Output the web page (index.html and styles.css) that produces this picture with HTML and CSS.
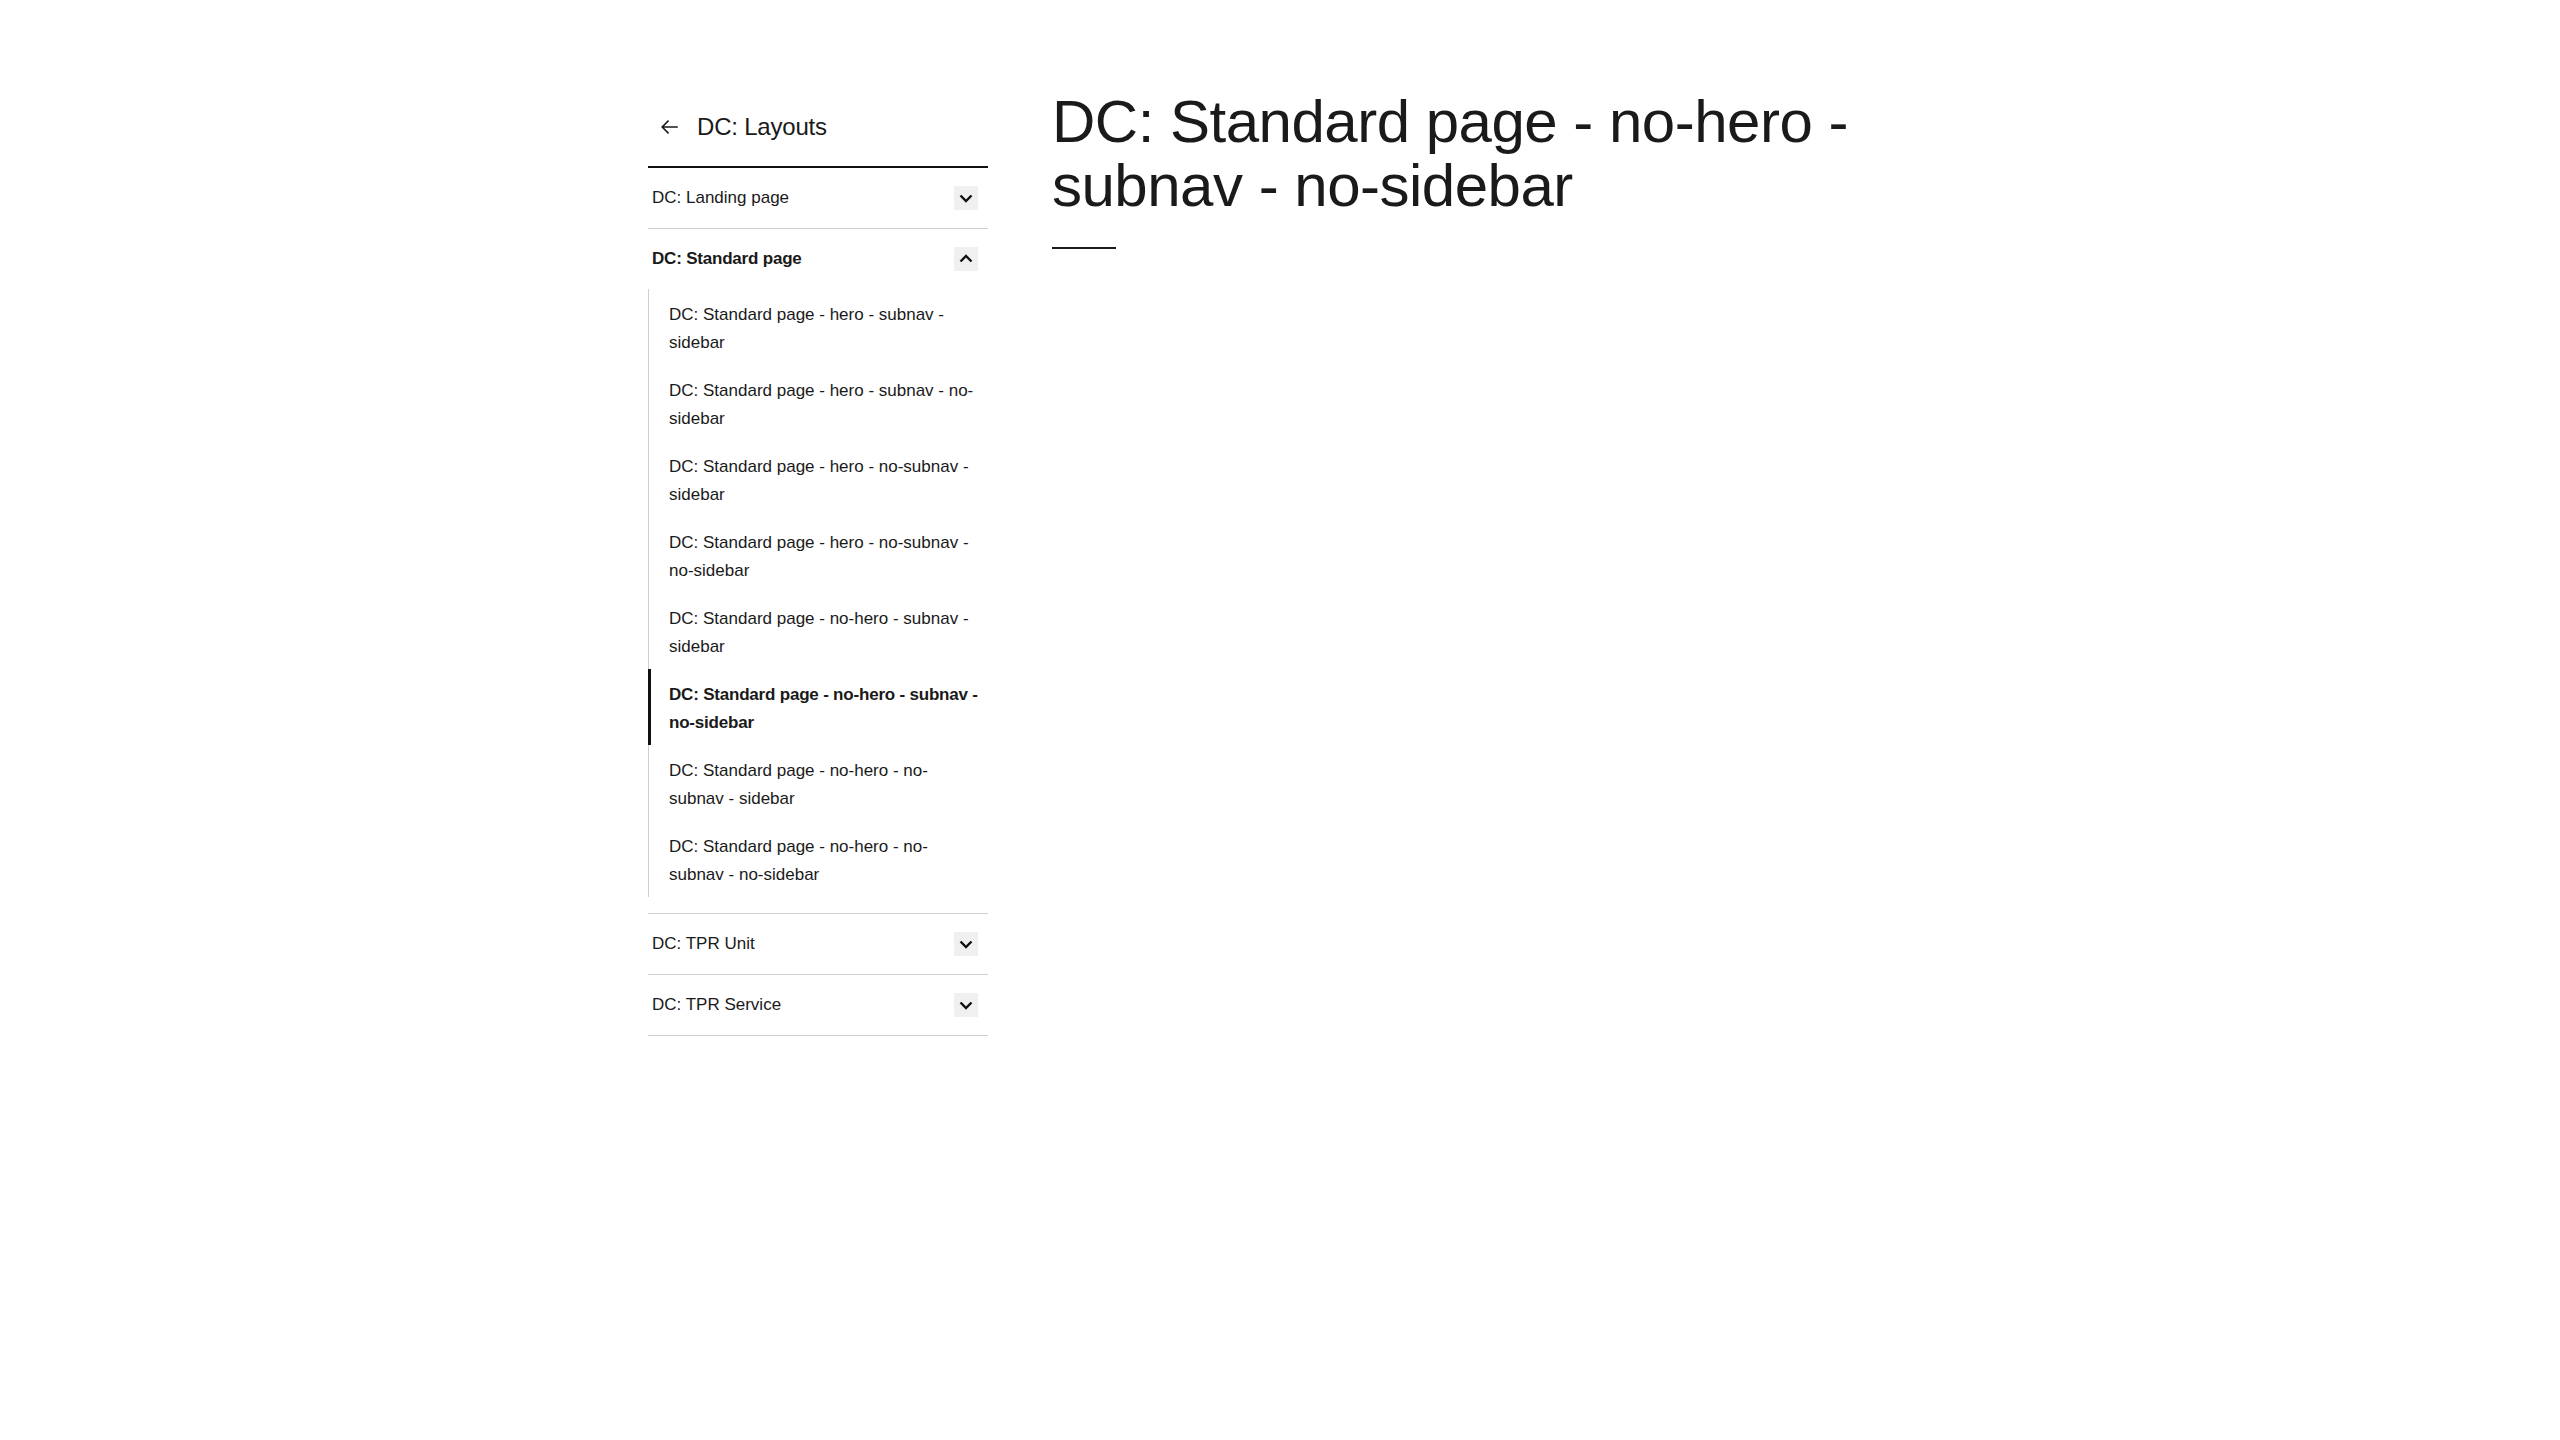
FILE: index.html
```html
<!DOCTYPE html>
<html lang="en">
<head>
<meta charset="utf-8">
<title>DC: Standard page - no-hero - subnav - no-sidebar</title>
<link rel="stylesheet" href="styles.css">
</head>
<body>
<div class="page">
  <aside class="sidenav">
    <div class="sidenav-head">
      <svg class="back-icon" viewBox="0 0 18 18" width="18" height="18" aria-hidden="true">
        <path d="M17 9H2.5M8 3.2L2.2 9 8 14.8" fill="none" stroke="#1a1a1a" stroke-width="1.6" stroke-linecap="square"/>
      </svg>
      <span class="sidenav-title">DC: Layouts</span>
    </div>
    <ul class="nav-list">
      <li class="nav-group">
        <div class="nav-row">
          <span class="nav-label">DC: Landing page</span>
          <span class="toggle"><svg viewBox="0 0 24 24" width="24" height="24"><path d="M6.5 9.5l5.5 5.5 5.5-5.5" fill="none" stroke="#111" stroke-width="2.4"/></svg></span>
        </div>
      </li>
      <li class="nav-group open">
        <div class="nav-row">
          <span class="nav-label bold">DC: Standard page</span>
          <span class="toggle"><svg viewBox="0 0 24 24" width="24" height="24"><path d="M6.5 14.5l5.5-5.5 5.5 5.5" fill="none" stroke="#111" stroke-width="2.4"/></svg></span>
        </div>
        <ul class="sub-list">
          <li class="sub-item">DC: Standard page - hero - subnav - sidebar</li>
          <li class="sub-item">DC: Standard page - hero - subnav - no-sidebar</li>
          <li class="sub-item">DC: Standard page - hero - no-subnav - sidebar</li>
          <li class="sub-item">DC: Standard page - hero - no-subnav - no-sidebar</li>
          <li class="sub-item">DC: Standard page - no-hero - subnav - sidebar</li>
          <li class="sub-item active">DC: Standard page - no-hero - subnav - no-sidebar</li>
          <li class="sub-item">DC: Standard page - no-hero - no-subnav - sidebar</li>
          <li class="sub-item">DC: Standard page - no-hero - no-subnav - no-sidebar</li>
        </ul>
      </li>
      <li class="nav-group">
        <div class="nav-row">
          <span class="nav-label">DC: TPR Unit</span>
          <span class="toggle"><svg viewBox="0 0 24 24" width="24" height="24"><path d="M6.5 9.5l5.5 5.5 5.5-5.5" fill="none" stroke="#111" stroke-width="2.4"/></svg></span>
        </div>
      </li>
      <li class="nav-group">
        <div class="nav-row">
          <span class="nav-label">DC: TPR Service</span>
          <span class="toggle"><svg viewBox="0 0 24 24" width="24" height="24"><path d="M6.5 9.5l5.5 5.5 5.5-5.5" fill="none" stroke="#111" stroke-width="2.4"/></svg></span>
        </div>
      </li>
    </ul>
  </aside>
  <main class="content">
    <h1 class="page-title">DC: Standard page - no-hero - subnav - no-sidebar</h1>
    <div class="title-rule"></div>
  </main>
</div>
</body>
</html>
```

FILE: styles.css
```css
* { box-sizing: border-box; }

html, body {
  margin: 0;
  padding: 0;
  background: #ffffff;
}

body {
  font-family: "Liberation Sans", Arial, sans-serif;
  color: #1a1a1a;
}

.page {
  width: 1264px;
  margin: 0 auto;
  padding-top: 90px;
  display: grid;
  grid-template-columns: 340px 1fr;
  column-gap: 64px;
  align-items: start;
}

/* Sidebar */
.sidenav-head {
  display: flex;
  align-items: center;
  gap: 19px;
  margin-top: 21px;
  padding-left: 12px;
  padding-bottom: 23px;
}

.back-icon {
  display: block;
  flex: none;
}

.sidenav-title {
  font-size: 24px;
  line-height: 32px;
  letter-spacing: -0.2px;
}

.nav-list {
  list-style: none;
  margin: 0;
  padding: 0;
  border-top: 2px solid #111;
}

.nav-group {
  border-bottom: 1px solid #cfcfcf;
}

.nav-group.open .sub-list {
  margin-bottom: 16px;
}

.nav-row {
  height: 60px;
  display: flex;
  align-items: center;
  justify-content: space-between;
  padding: 0 10px 0 4px;
}

.nav-label {
  font-size: 17px;
  line-height: 24px;
}

.nav-label.bold {
  font-weight: 700;
  letter-spacing: -0.2px;
}

.toggle {
  width: 24px;
  height: 24px;
  background: #f0f0f0;
  display: flex;
  align-items: center;
  justify-content: center;
}

.toggle svg {
  display: block;
  width: 24px;
  height: 24px;
}

.sub-list {
  list-style: none;
  margin: 0;
  padding: 0;
}

.sub-item {
  font-size: 17px;
  line-height: 28px;
  padding: 12px 8px 8px 20px;
  border-left: 1px solid #cfcfcf;
}

.sub-item.active {
  font-weight: 700;
  letter-spacing: -0.2px;
  border-left: 3px solid #111;
  padding-left: 18px;
}

/* Main */
.page-title {
  margin: 0;
  font-size: 60px;
  line-height: 64px;
  font-weight: 400;
  letter-spacing: -0.5px;
  color: #1a1a1a;
}

.title-rule {
  margin-top: 29px;
  width: 64px;
  height: 2px;
  background: #1a1a1a;
}
```
